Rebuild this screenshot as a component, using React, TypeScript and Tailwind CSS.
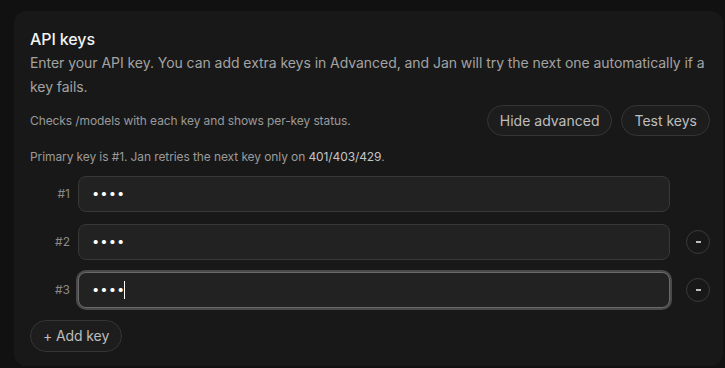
import { useState } from "react";

type KeyRow = { id: number; value: string };

const font = "font-['Inter',_'Liberation_Sans',_sans-serif]";

function PillButton({ children }: { children: React.ReactNode }) {
  return (
    <button className="h-[31px] px-3 rounded-full border border-[#353535] bg-[#1d1d1d] text-[14px] text-[#bdbdbd] leading-none">
      {children}
    </button>
  );
}

export default function App() {
  const [keys] = useState<KeyRow[]>([
    { id: 1, value: "abcd" },
    { id: 2, value: "abcd" },
    { id: 3, value: "abcd" },
  ]);
  const focused = 3;

  return (
    <div className={`h-screen bg-[#111111] pl-[14px] pt-[11px] pr-[2px] overflow-hidden ${font}`}>
      <div className="h-[355px] rounded-xl bg-[#181818] pl-4 pr-[13px] pt-4">
        {/* Header */}
        <h2 className="text-[16px] leading-6 font-medium tracking-[-0.1px] text-[#f2f2f2]">API keys</h2>
        <p className="text-[14px] leading-6 tracking-[-0.05px] text-[#a3a3a3]">
          Enter your API key. You can add extra keys in Advanced, and Jan will try the next one automatically if a
          key fails.
        </p>

        {/* Actions */}
        <div className="mt-1.5 flex items-center justify-between">
          <p className="text-[12px] tracking-[-0.1px] text-[#9a9a9a]">Checks /models with each key and shows per-key status.</p>
          <div className="flex gap-[9px]">
            <PillButton>Hide advanced</PillButton>
            <PillButton>Test keys</PillButton>
          </div>
        </div>

        <p className="mt-[13px] text-[12px] leading-4 tracking-[-0.1px] text-[#9a9a9a]">
          Primary key is #1. Jan retries the next key only on{" "}
          <span className="text-[#c4c4c4]">401/403/429</span>.
        </p>

        {/* Key rows */}
        <div className="mt-[11px] flex flex-col gap-3">
          {keys.map((k) => (
            <div key={k.id} className="flex items-center">
              <span className="w-10 text-right text-[12px] text-[#8a8a8a]">#{k.id}</span>
              <div
                className={`ml-2 flex-1 h-[36px] rounded-lg bg-[#222222] flex items-center pl-[13px] ${
                  k.id === focused
                    ? "border border-[#6a6a6a] ring-2 ring-[#4a4a4a]"
                    : "border border-[#383838]"
                }`}
              >
                <span className="text-[13px] tracking-[1px] text-white">
                  {"•".repeat(k.value.length)}
                </span>
                {k.id === focused && <span className="ml-[-1px] h-[18px] w-px bg-white" />}
              </div>
              <div className="ml-4 w-6 flex justify-center">
                {k.id !== 1 && (
                  <button className="w-6 h-6 rounded-full border border-[#3a3a3a] flex items-center justify-center">
                    <span className="block w-[5px] h-[1.5px] bg-[#bdbdbd]" />
                  </button>
                )}
              </div>
            </div>
          ))}
        </div>

        <div className="mt-[12px]">
          <button className="h-[32px] px-[12px] rounded-full border border-[#353535] bg-[#1d1d1d] text-[14px] tracking-[-0.1px] text-[#bdbdbd] leading-none">
            + Add key
          </button>
        </div>
      </div>
    </div>
  );
}
